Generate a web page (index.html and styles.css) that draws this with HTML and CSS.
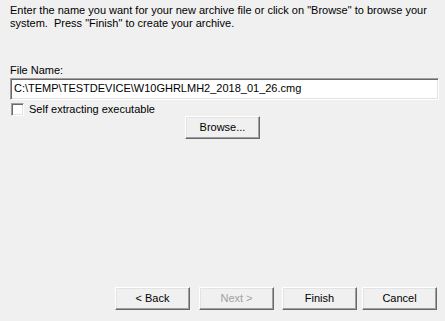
FILE: index.html
```html
<!DOCTYPE html>
<html>
<head>
<meta charset="utf-8">
<link rel="stylesheet" href="styles.css">
</head>
<body>
<div class="wizard">
  <p class="intro">Enter the name you want for your new archive file or click on "Browse" to browse your system.&nbsp; Press "Finish" to create your archive.</p>
  <div class="file-group">
    <label class="label" for="fname">File Name:</label>
    <div class="field" id="fname">C:\TEMP\TESTDEVICE\W10GHRLMH2_2018_01_26.cmg</div>
    <div class="check-row">
      <span class="checkbox"></span>
      <span class="check-label">Self extracting executable</span>
    </div>
    <div class="browse-row">
      <button class="btn">Browse...</button>
    </div>
  </div>
  <div class="nav-row">
    <button class="btn btn-back">&lt; Back</button>
    <button class="btn btn-next" disabled>Next &gt;</button>
    <button class="btn btn-finish">Finish</button>
    <button class="btn btn-cancel">Cancel</button>
  </div>
</div>
</body>
</html>
```
FILE: styles.css
```css
html, body {
  margin: 0;
  padding: 0;
  background: #f0f0f0;
}
body {
  font-family: "Liberation Sans", Arial, sans-serif;
  font-size: 11px;
  color: #000;
}
.wizard {
  width: 445px;
  height: 321px;
  box-sizing: border-box;
  padding: 4px 6px 11px 10px;
  display: flex;
  flex-direction: column;
}
.intro {
  margin: 0;
  line-height: 13px;
  width: 420px;
}
.file-group {
  margin-top: 34px;
  display: flex;
  flex-direction: column;
}
.label {
  line-height: 13px;
  height: 13px;
}
.field {
  margin-top: 1px;
  height: 22px;
  box-sizing: border-box;
  background: #fff;
  border-top: 1px solid #a0a0a0;
  border-left: 1px solid #a0a0a0;
  border-right: 1px solid #fff;
  border-bottom: 1px solid #fff;
  box-shadow: inset 1px 1px 0 #696969, inset -1px -1px 0 #e3e3e3;
  padding: 0 3px;
  line-height: 19px;
  white-space: nowrap;
}
.check-row {
  margin-top: 3px;
  display: flex;
  align-items: center;
  height: 13px;
  padding-left: 1px;
}
.checkbox {
  width: 13px;
  height: 13px;
  box-sizing: border-box;
  background: #fff;
  border-top: 1px solid #a0a0a0;
  border-left: 1px solid #a0a0a0;
  border-right: 1px solid #fff;
  border-bottom: 1px solid #fff;
  box-shadow: inset 1px 1px 0 #696969, inset -1px -1px 0 #e3e3e3;
}
.check-label {
  margin-left: 5px;
  line-height: 13px;
}
.browse-row {
  display: flex;
  padding-left: 175px;
}
.btn {
  width: 75px;
  height: 23px;
  box-sizing: border-box;
  margin: 0;
  padding: 0;
  background: #f0f0f0;
  font-family: "Liberation Sans", Arial, sans-serif;
  font-size: 11px;
  color: #000;
  border-top: 1px solid #fff;
  border-left: 1px solid #fff;
  border-right: 1px solid #696969;
  border-bottom: 1px solid #696969;
  box-shadow: inset -1px -1px 0 #a0a0a0, inset 1px 1px 0 #e3e3e3;
  border-radius: 0;
  line-height: 19px;
}
.btn:disabled {
  color: #a0a0a0;
}
.nav-row {
  margin-top: auto;
  display: flex;
  padding-left: 105px;
}
.btn-next {
  margin-left: 9px;
}
.btn-finish {
  margin-left: 8px;
}
.btn-cancel {
  margin-left: 5px;
}
```
